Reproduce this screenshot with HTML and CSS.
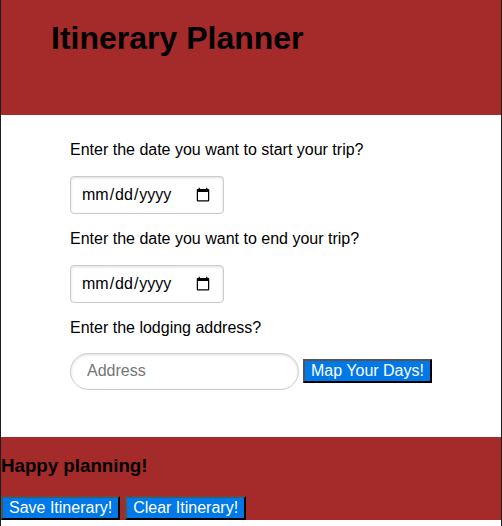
FILE: index.html
```html
<!DOCTYPE html>
<html lang="en">
<head>
<meta charset="utf-8">
<title>Itinerary Planner</title>
<link rel="stylesheet" href="styles.css">
</head>
<body>
<header class="header"><h1>Itinerary Planner</h1></header>
<main class="form">
  <p>Enter the date you want to start your trip?</p>
  <input class="date" type="date">
  <p>Enter the date you want to end your trip?</p>
  <input class="date" type="date">
  <p>Enter the lodging address?</p>
  <div class="row"><input class="address" type="text" placeholder="Address"><button class="btn">Map Your Days!</button></div>
</main>
<footer class="footer">
  <h3>Happy planning!</h3>
  <div class="actions"><button class="btn">Save Itinerary!</button><button class="btn">Clear Itinerary!</button></div>
</footer>
</body>
</html>
```
FILE: styles.css
```css
* { box-sizing: border-box; }
body {
  margin: 0;
  height: 526px;
  overflow: hidden;
  border: solid #1e1e20;
  border-width: 0 1px;
  background: #fff;
  color: #000;
  font: 16px/24px "Liberation Sans", Arial, sans-serif;
}
.header { height: 115px; padding: 18px 50px; background: #a52a2a; }
h1 { margin: 0; font-size: 32px; line-height: 40px; }
.form { height: 322px; padding: 23px 69px 0; }
.form p { margin: 0 0 14px; }
input { font: inherit; display: block; }
.date {
  width: 154px;
  height: 38px;
  margin-bottom: 13px;
  padding: 0 10px;
  border: 1px solid #ccc;
  border-radius: 4px;
  box-shadow: inset 0 1px 3px #ddd;
  background: #fff;
}
.row { display: flex; gap: 4px; align-items: flex-start; margin-top: -1px; }
.row .btn { margin-top: 6px; }
.address {
  width: 229px;
  height: 37px;
  padding: 0 16px 1px;
  border: 1px solid #ccc;
  border-radius: 19px;
  box-shadow: inset 0 1px 3px #ddd;
}
.btn {
  height: 24px;
  padding: 0 6px;
  border: 2px outset #000;
  background: #0078e7;
  color: #fff;
  font: 16px/20px "Liberation Sans", Arial, sans-serif;
  white-space: nowrap;
}
.footer { height: 83px; padding-top: 17px; background: #a52a2a; }
h3 { margin: 0 0 18px; font-size: 18.72px; line-height: 24px; }
.actions { display: flex; gap: 5px; }
```
